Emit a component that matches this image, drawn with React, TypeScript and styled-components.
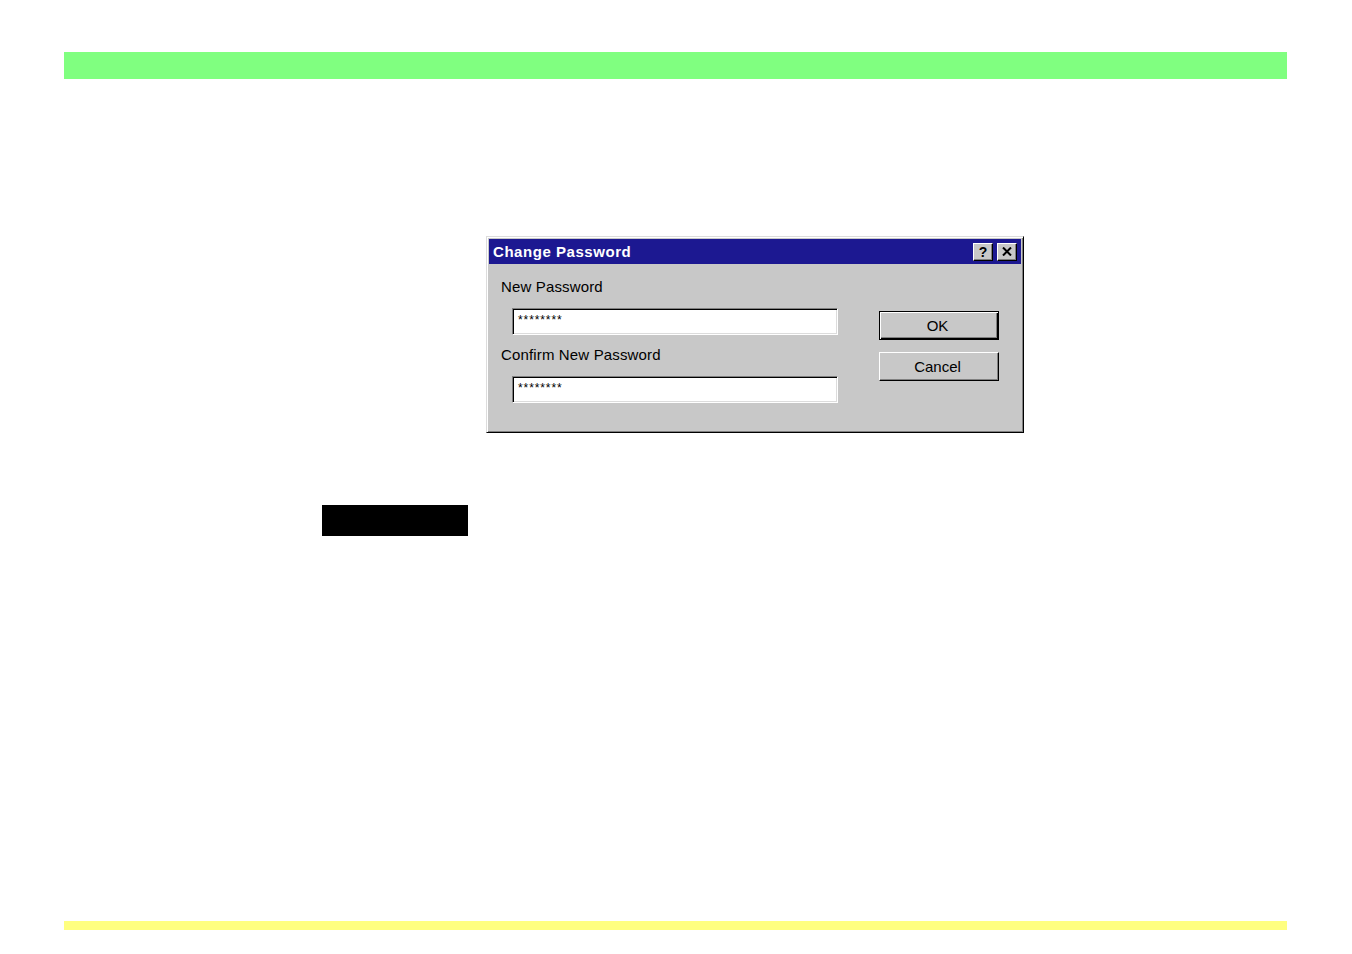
import React from "react";
import styled, { createGlobalStyle } from "styled-components";

const GlobalStyle = createGlobalStyle`
  html, body {
    margin: 0;
    padding: 0;
    background: #ffffff;
  }
  body {
    font-family: "Liberation Sans", Arial, sans-serif;
  }
`;

const Page = styled.div`
  width: 1352px;
  height: 954px;
  display: flex;
  flex-direction: column;
  padding: 52px 65px 0 64px;
  box-sizing: border-box;
`;

const Band = styled.div<{ $color: string; $height: number }>`
  height: ${(p) => p.$height}px;
  background: ${(p) => p.$color};
  flex-shrink: 0;
`;

const DialogRow = styled.div`
  display: flex;
  padding: 157px 0 0 422px;
`;

const Dialog = styled.div`
  width: 538px;
  height: 197px;
  box-sizing: border-box;
  background: #c8c8c8;
  border-top: 1px solid #dcdcdc;
  border-left: 1px solid #dcdcdc;
  border-right: 1px solid #000000;
  border-bottom: 1px solid #000000;
  box-shadow: inset 1px 1px 0 #ffffff, inset -1px -1px 0 #808080;
  padding: 2px;
  display: flex;
  flex-direction: column;
`;

const TitleBar = styled.div`
  height: 25px;
  background: #1c1891;
  display: flex;
  align-items: center;
  justify-content: space-between;
  padding: 0 4px 0 4px;
`;

const Title = styled.span`
  color: #ffffff;
  font-family: "Liberation Sans", Arial, sans-serif;
  font-weight: bold;
  font-size: 15px;
  letter-spacing: 0.55px;
`;

const TitleButtons = styled.div`
  display: flex;
  gap: 4px;
`;

const TitleButton = styled.div`
  width: 20px;
  height: 18px;
  box-sizing: border-box;
  background: #c8c8c8;
  border-top: 1px solid #ffffff;
  border-left: 1px solid #ffffff;
  border-right: 1px solid #000000;
  border-bottom: 1px solid #000000;
  box-shadow: inset -1px -1px 0 #808080;
  display: flex;
  align-items: center;
  justify-content: center;
  color: #000000;
  font-family: "Liberation Sans", Arial, sans-serif;
  font-weight: bold;
  font-size: 14px;
  line-height: 1;
`;

const Body = styled.div`
  flex: 1;
  display: flex;
  padding: 0 0 0 12px;
`;

const Fields = styled.div`
  width: 340px;
  display: flex;
  flex-direction: column;
`;

const Label = styled.div<{ $top: number }>`
  margin-top: ${(p) => p.$top}px;
  height: 17px;
  font-size: 15px;
  letter-spacing: 0.15px;
  color: #000000;
  line-height: 17px;
`;

const Input = styled.div<{ $top: number }>`
  margin: ${(p) => p.$top}px 0 0 11px;
  width: 326px;
  height: 27px;
  box-sizing: border-box;
  background: #ffffff;
  border-top: 1px solid #808080;
  border-left: 1px solid #808080;
  border-right: 1px solid #ffffff;
  border-bottom: 1px solid #ffffff;
  box-shadow: inset 1px 1px 0 #000000, inset -1px -1px 0 #dcdcdc;
  font-size: 12px;
  line-height: 1;
  padding: 5px 0 0 5px;
  letter-spacing: 0.9px;
`;

const Buttons = styled.div`
  margin-left: 38px;
  padding-top: 47px;
  display: flex;
  flex-direction: column;
  gap: 12px;
`;

const Button = styled.div<{ $default?: boolean }>`
  width: 120px;
  height: 29px;
  box-sizing: border-box;
  background: #c8c8c8;
  display: flex;
  align-items: center;
  justify-content: center;
  padding-right: 3px;
  font-size: 15px;
  color: #000000;
  border-top: 1px solid ${(p) => (p.$default ? "#000000" : "#ffffff")};
  border-left: 1px solid ${(p) => (p.$default ? "#000000" : "#ffffff")};
  border-right: 1px solid #000000;
  border-bottom: 1px solid #000000;
  box-shadow: ${(p) =>
    p.$default
      ? "inset 1px 1px 0 #ffffff, inset -1px -1px 0 #000000, inset -2px -2px 0 #808080"
      : "inset -1px -1px 0 #808080"};
`;

const BlackRow = styled.div`
  display: flex;
  padding: 72px 0 0 258px;
`;

const BlackBox = styled.div`
  width: 146px;
  height: 31px;
  background: #000000;
`;

const Spacer = styled.div`
  flex: 1;
`;

export default function App() {
  return (
    <>
      <GlobalStyle />
      <Page>
        <Band $color="#80ff80" $height={27} />
        <DialogRow>
          <Dialog>
            <TitleBar>
              <Title>Change Password</Title>
              <TitleButtons>
                <TitleButton>?</TitleButton>
                <TitleButton>
                  <svg width="10" height="9" viewBox="0 0 10 9">
                    <path d="M1 0.5 L9 8.5 M9 0.5 L1 8.5" stroke="#000" strokeWidth="2" />
                  </svg>
                </TitleButton>
              </TitleButtons>
            </TitleBar>
            <Body>
              <Fields>
                <Label $top={14}>New Password</Label>
                <Input $top={13}>********</Input>
                <Label $top={11}>Confirm New Password</Label>
                <Input $top={13}>********</Input>
              </Fields>
              <Buttons>
                <Button $default>OK</Button>
                <Button>Cancel</Button>
              </Buttons>
            </Body>
          </Dialog>
        </DialogRow>
        <BlackRow>
          <BlackBox />
        </BlackRow>
        <Spacer />
        <Band $color="#ffff80" $height={9} />
        <div style={{ height: 24 }} />
      </Page>
    </>
  );
}
